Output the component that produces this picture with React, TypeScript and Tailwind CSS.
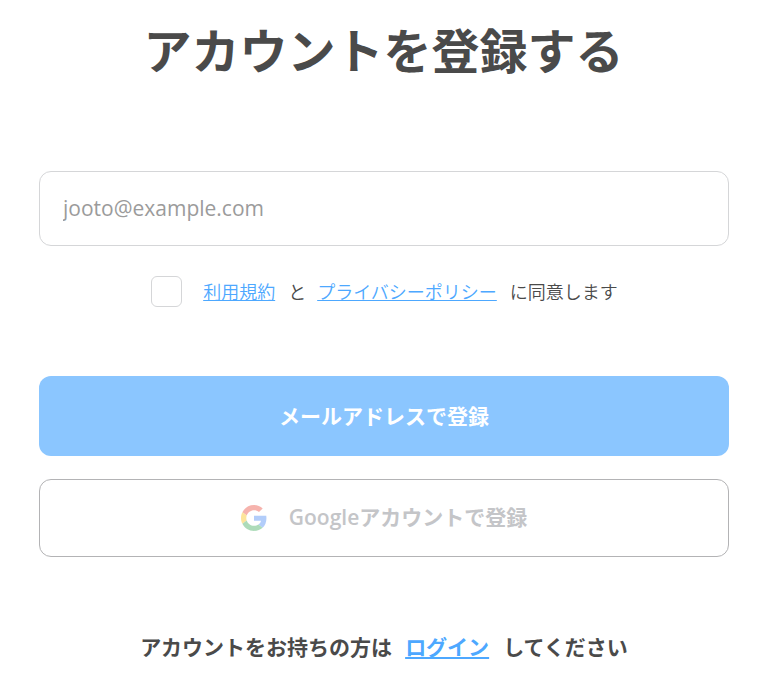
// Account registration form: e-mail field, terms checkbox, submit buttons.

import { type ReactNode } from 'react';

interface TextLinkProps {
  className?: string;
  children: ReactNode;
}

function TextLink({ className = '', children }: TextLinkProps) {
  return (
    <a href="#" className={`text-[#4da8ff] underline ${className}`}>
      {children}
    </a>
  );
}

function GoogleLogo() {
  return (
    <svg viewBox="0 0 48 48" className="h-[26px] w-[26px] opacity-40" aria-hidden="true">
      <path
        fill="#EA4335"
        d="M24 9.5c3.54 0 6.71 1.22 9.21 3.6l6.85-6.85C35.9 2.38 30.47 0 24 0 14.62 0 6.51 5.38 2.56 13.22l7.98 6.19C12.43 13.72 17.74 9.5 24 9.5z"
      />
      <path
        fill="#4285F4"
        d="M46.98 24.55c0-1.57-.15-3.09-.38-4.55H24v9.02h12.94c-.58 2.96-2.26 5.48-4.78 7.18l7.73 6c4.51-4.18 7.09-10.36 7.09-17.65z"
      />
      <path
        fill="#FBBC05"
        d="M10.53 28.59c-.48-1.45-.76-2.99-.76-4.59s.27-3.14.76-4.59l-7.98-6.19C.92 16.46 0 20.12 0 24c0 3.88.92 7.54 2.56 10.78l7.97-6.19z"
      />
      <path
        fill="#34A853"
        d="M24 48c6.48 0 11.93-2.13 15.89-5.81l-7.73-6c-2.15 1.45-4.92 2.3-8.16 2.3-6.26 0-11.57-4.22-13.47-9.91l-7.98 6.19C6.51 42.62 14.62 48 24 48z"
      />
    </svg>
  );
}

export default function App() {
  return (
    <main className="h-[689px] overflow-hidden bg-white pr-10 pl-[39px] font-['Open_Sans','Noto_Sans_CJK_JP',sans-serif] text-[#4a4a4a]">
      <h1 className="pt-[15px] pr-px text-center text-[48px] leading-[72px] font-bold whitespace-nowrap">
        アカウントを登録する
      </h1>

      <form className="mt-[84px]" onSubmit={(e) => e.preventDefault()}>
        <input
          type="email"
          placeholder="jooto@example.com"
          className="block h-[75px] w-full rounded-xl border border-[#d5d6d8] px-[23px] pb-[2px] text-[21px] outline-none placeholder:text-[#9b9b9b]"
        />

        <div className="mt-[30px] flex h-[31px] items-center justify-center pl-px text-[18px] leading-[31px] whitespace-nowrap">
          <input
            type="checkbox"
            aria-label="同意"
            className="mr-[21px] h-[31px] w-[31px] appearance-none rounded-md border border-[#d5d6d8]"
          />
          <div className="flex pt-[2px] font-['Open_Sans','Noto_Sans_CJK_JP_DemiLight','Noto_Sans_CJK_JP',sans-serif]">
            <TextLink className="decoration-1 underline-offset-1">利用規約</TextLink>
            <span className="mr-[11px] ml-[13px]">と</span>
            <TextLink className="decoration-1 underline-offset-1">プライバシーポリシー</TextLink>
            <span className="ml-[13px]">に同意します</span>
          </div>
        </div>

        <button
          type="submit"
          className="mt-[69px] block h-20 w-full rounded-xl bg-[#8bc6ff] pt-[2px] text-[21px] font-bold text-white"
        >
          メールアドレスで登録
        </button>

        <button
          type="button"
          className="mt-[23px] flex h-[78px] w-full items-center justify-center rounded-xl border border-[#b3b3b5] text-[21px] font-semibold text-[#c4c5c8]"
        >
          <GoogleLogo />
          <span className="ml-[22px]">Googleアカウントで登録</span>
        </button>
      </form>

      <p className="mt-[74px] flex justify-center text-[21px] leading-8 font-bold whitespace-nowrap">
        <span>アカウントをお持ちの方は</span>
        <TextLink className="mr-[14px] ml-[13px] decoration-2 underline-offset-2">ログイン</TextLink>
        <span>してください</span>
      </p>
    </main>
  );
}
